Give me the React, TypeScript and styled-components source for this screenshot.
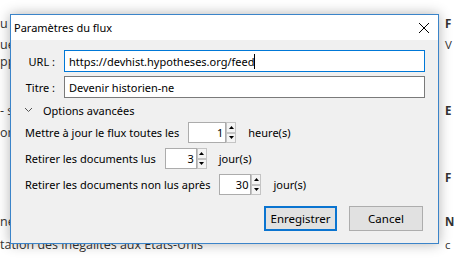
import React from "react";
import styled, { createGlobalStyle } from "styled-components";

const GlobalStyle = createGlobalStyle`
  html, body {
    margin: 0;
    padding: 0;
    background: #ffffff;
  }
  body {
    font-family: "Segoe UI", "Noto Sans", sans-serif;
  }
`;

const Screen = styled.div`
  position: relative;
  width: 454px;
  height: 259px;
  overflow: hidden;
  background: #ffffff;
`;

const Backdrop = styled.div`
  display: flex;
  flex-direction: column;
  font-family: "Segoe UI", "Open Sans", sans-serif;
  font-size: 12.5px;
  color: #333333;
`;

const BackRow = styled.div<{ $gap: number }>`
  display: flex;
  justify-content: space-between;
  margin-top: ${(p) => p.$gap}px;
  height: 16px;
  line-height: 16px;
  white-space: nowrap;
`;

const BackLeft = styled.span`
  flex: 1;
  overflow: hidden;
`;

const BackRight = styled.span<{ $bold?: boolean }>`
  width: 9px;
  font-size: 11.5px;
  font-weight: ${(p) => (p.$bold ? 700 : 400)};
`;

const Dialog = styled.div`
  position: absolute;
  left: 10px;
  top: 14px;
  width: 429px;
  height: 230px;
  box-sizing: border-box;
  border: 1px solid #3b84c9;
  background: #f0f0f0;
  box-shadow: 0 0 12px rgba(0, 0, 0, 0.3);
  display: flex;
  flex-direction: column;
  font-family: "Segoe UI", "Noto Sans", sans-serif;
  font-size: 11px;
  color: #000000;
`;

const TitleBar = styled.div`
  height: 25px;
  flex-shrink: 0;
  background: #ffffff;
  display: flex;
  align-items: center;
  justify-content: space-between;
  padding: 0 9px 0 3px;
`;

const Title = styled.span`
  font-size: 11px;
`;

const Body = styled.div`
  flex: 1;
  display: flex;
  flex-direction: column;
  padding: 10px 13px 0 14px;
`;

const FieldGrid = styled.div`
  display: grid;
  grid-template-columns: 30px 1fr;
  column-gap: 9px;
  row-gap: 4px;
  align-items: center;
`;

const FieldLabel = styled.label`
  text-align: right;
  white-space: nowrap;
`;

const TextInput = styled.div<{ $focused?: boolean }>`
  height: 22px;
  box-sizing: border-box;
  border: 1px solid ${(p) => (p.$focused ? "#0078d7" : "#7a7a7a")};
  background: #ffffff;
  display: flex;
  align-items: center;
  padding: 0 4px;
  white-space: nowrap;
`;

const Caret = styled.span`
  display: inline-block;
  width: 1px;
  height: 15px;
  background: #000000;
`;

const Expander = styled.div`
  display: flex;
  align-items: center;
  height: 16px;
  margin-top: 4px;
  gap: 11px;
`;

const SettingRows = styled.div`
  display: flex;
  flex-direction: column;
  gap: 5px;
  margin-top: 4px;
`;

const SettingRow = styled.div`
  display: flex;
  align-items: center;
  height: 21px;
  white-space: nowrap;
`;

const Spin = styled.div`
  display: flex;
  align-items: stretch;
  height: 21px;
  margin: 0 12px 0 9px;
`;

const SpinField = styled.div<{ $width: number }>`
  width: ${(p) => p.$width}px;
  box-sizing: border-box;
  border: 1px solid #acacac;
  background: #ffffff;
  display: flex;
  align-items: center;
  justify-content: flex-end;
  padding-right: 2px;
`;

const SpinButtons = styled.div`
  width: 10px;
  display: flex;
  flex-direction: column;
`;

const SpinButton = styled.div`
  flex: 1;
  box-sizing: border-box;
  border: 1px solid #c4c4c4;
  background: #f4f4f4;
  display: flex;
  align-items: center;
  justify-content: center;
`;

const Footer = styled.div`
  display: flex;
  justify-content: flex-end;
  gap: 12px;
  margin-top: 11px;
  padding-right: 2px;
`;

const Button = styled.button<{ $primary?: boolean; $width: number }>`
  width: ${(p) => p.$width}px;
  height: 25px;
  box-sizing: border-box;
  background: #e1e1e1;
  border: ${(p) => (p.$primary ? "2px solid #0a74d0" : "1px solid #adadad")};
  font-family: inherit;
  font-size: 11.5px;
  color: #000000;
  padding: 0;
`;

const Arrow = ({ up }: { up?: boolean }) => (
  <svg width="5" height="3" viewBox="0 0 5 3">
    <polygon points={up ? "0,3 5,3 2.5,0" : "0,0 5,0 2.5,3"} fill="#000" />
  </svg>
);

const SpinBox = ({ value, width }: { value: string; width: number }) => (
  <Spin>
    <SpinField $width={width}>{value}</SpinField>
    <SpinButtons>
      <SpinButton>
        <Arrow up />
      </SpinButton>
      <SpinButton>
        <Arrow />
      </SpinButton>
    </SpinButtons>
  </Spin>
);

const background = [
  { gap: 16, left: "u i", right: "F", bold: true },
  { gap: 5, left: "ue", right: "V" },
  { gap: 1, left: "pp", right: "" },
  { gap: 33, left: "- s", right: "E", bold: true },
  { gap: 6, left: "or", right: "" },
  { gap: 29, left: "", right: "F", bold: true },
  { gap: 28, left: "ne", right: "N", bold: true },
  { gap: 7, left: "tation des inégalités aux États-Unis", right: "c" },
];

export default function App() {
  return (
    <Screen>
      <GlobalStyle />
      <Backdrop>
        {background.map((r, i) => (
          <BackRow key={i} $gap={r.gap}>
            <BackLeft>{r.left}</BackLeft>
            <BackRight $bold={r.bold}>{r.right}</BackRight>
          </BackRow>
        ))}
      </Backdrop>

      <Dialog>
        <TitleBar>
          <Title>Paramètres du flux</Title>
          <svg width="10" height="10" viewBox="0 0 10 10">
            <path d="M0 0 L10 10 M10 0 L0 10" stroke="#000" strokeWidth="1" />
          </svg>
        </TitleBar>

        <Body>
          <FieldGrid>
            <FieldLabel>URL :</FieldLabel>
            <TextInput $focused>
              https://devhist.hypotheses.org/feed
              <Caret />
            </TextInput>
            <FieldLabel>Titre :</FieldLabel>
            <TextInput>Devenir historien-ne</TextInput>
          </FieldGrid>

          <Expander>
            <svg width="7" height="4" viewBox="0 0 7 4">
              <polyline points="0,0 3.5,3.5 7,0" fill="none" stroke="#555" strokeWidth="1" />
            </svg>
            <span>Options avancées</span>
          </Expander>

          <SettingRows>
            <SettingRow>
              Mettre à jour le flux toutes les
              <SpinBox value="1" width={38} />
              heure(s)
            </SettingRow>
            <SettingRow>
              Retirer les documents lus
              <SpinBox value="3" width={32} />
              jour(s)
            </SettingRow>
            <SettingRow>
              Retirer les documents non lus après
              <SpinBox value="30" width={32} />
              jour(s)
            </SettingRow>
          </SettingRows>

          <Footer>
            <Button $primary $width={73}>Enregistrer</Button>
            <Button $width={74}>Cancel</Button>
          </Footer>
        </Body>
      </Dialog>
    </Screen>
  );
}
